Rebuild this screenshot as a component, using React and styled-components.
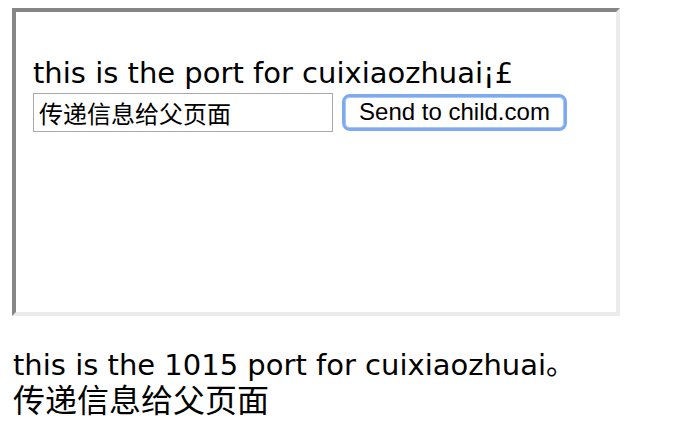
import React from "react";
import styled, { createGlobalStyle } from "styled-components";

const Global = createGlobalStyle`
  html, body { margin: 0; padding: 0; background: #fff; }
  body { font-family: "DejaVu Sans", "Noto Sans CJK SC", sans-serif; color: #000; }
`;

const Page = styled.div`
  padding: 8px 0 0 12px;
  width: 664px;
`;

const Frame = styled.div`
  box-sizing: border-box;
  width: 608px;
  height: 308px;
  border-style: solid;
  border-width: 4px;
  border-color: #858585 #ebebeb #ebebeb #858585;
  background: #fff;
  padding: 0 16px;
`;

const FrameTitle = styled.p`
  margin: 42px 0 0 1px;
  font-family: "DejaVu Sans", "Noto Sans CJK SC", sans-serif;
  font-size: 29px;
  line-height: 38px;
  white-space: nowrap;
`;

const Row = styled.div`
  display: flex;
  align-items: center;
  gap: 9px;
  margin-top: 1px;
`;

const Field = styled.input`
  box-sizing: border-box;
  width: 300px;
  height: 39px;
  margin: 0 0 0 1px;
  border: 1px solid #a9a9a9;
  padding: 0 5px;
  font-family: "Noto Sans CJK SC", sans-serif;
  font-size: 24px;
  color: #000;
  background: #fff;
  outline: none;
`;

const SendButton = styled.button`
  box-sizing: border-box;
  width: 225px;
  height: 37px;
  border: 3px solid #7eaaf3;
  border-radius: 8px;
  background: #fff;
  padding: 0 0 1px;
  font-family: "Liberation Sans", sans-serif;
  font-size: 24px;
  color: #000;
  box-shadow: inset 0 0 0 1px #a8c6f6;
`;

const Message = styled.div`
  margin: 31px 0 0 1px;
  white-space: nowrap;
`;

const MessageLine = styled.div`
  font-family: "DejaVu Sans", "Noto Sans CJK SC", sans-serif;
  font-size: ${(p) => (p.$cjk ? "32px" : "29px")};
  line-height: 36px;
`;

export default function App() {
  return (
    <>
      <Global />
      <Page>
        <Frame>
          <FrameTitle>this is the port for cuixiaozhuai¡£</FrameTitle>
          <Row>
            <Field defaultValue="传递信息给父页面" />
            <SendButton>Send to child.com</SendButton>
          </Row>
        </Frame>
        <Message>
          <MessageLine>this is the 1015 port for cuixiaozhuai。</MessageLine>
          <MessageLine $cjk>传递信息给父页面</MessageLine>
        </Message>
      </Page>
    </>
  );
}
